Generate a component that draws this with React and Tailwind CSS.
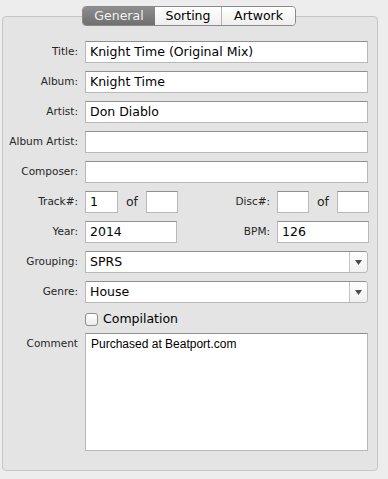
const ui = { fontFamily: '"DejaVu Sans", "Lucida Grande", sans-serif' };

const Label = ({ children }) => (
  <div className="w-[75px] mr-[7px] shrink-0 text-right text-[10.5px] text-[#262626]" style={ui}>
    {children}
  </div>
);

const Field = ({ value = '', className = 'w-[283px]' }) => (
  <div
    className={`${className} h-[22px] shrink-0 flex items-center bg-white border border-[#b8b8b8] border-t-[#8f8f8f] pl-[4px] text-[12.5px] text-black overflow-hidden whitespace-nowrap`}
    style={ui}
  >
    {value}
  </div>
);

const Combo = ({ value }) => (
  <div className="w-[283px] h-[22px] flex bg-white border border-[#b8b8b8] border-t-[#8f8f8f] rounded-r-[4px]" style={ui}>
    <div className="flex-1 flex items-center pl-[4px] text-[12.5px] text-black">{value}</div>
    <div className="w-[18px] flex items-center justify-center border-l border-[#c4c4c4] bg-gradient-to-b from-white to-[#f0f0f0] rounded-r-[3px]">
      <svg width="7" height="5" viewBox="0 0 7 5">
        <path d="M0 0 H7 L3.5 5 Z" fill="#4a4a4a" />
      </svg>
    </div>
  </div>
);

const Row = ({ label, children }) => (
  <div className="flex items-center h-[22px]">
    <Label>{label}</Label>
    {children}
  </div>
);

const Of = () => (
  <span className="text-[12.5px] text-[#262626] w-[28px] text-center shrink-0" style={ui}>
    of
  </span>
);

export default function App() {
  return (
    <div className="w-[388px] h-[479px] bg-[#ededed] flex flex-col pt-[6px] overflow-hidden">
      <div className="relative z-10 flex h-[20px] pl-[82px]">
        <div className="flex h-[20px] border border-[#8a8a8a] rounded-[4px] overflow-hidden text-[12.5px]" style={ui}>
          <div className="w-[72px] flex items-center justify-center bg-gradient-to-b from-[#8e8e8e] to-[#6f6f6f] text-[#f2f2f2]">
            General
          </div>
          <div className="w-[67px] flex items-center justify-center bg-gradient-to-b from-white to-[#eeeeee] text-black border-r border-[#b3b3b3]">
            Sorting
          </div>
          <div className="w-[73px] flex items-center justify-center bg-gradient-to-b from-white to-[#eeeeee] text-black">
            Artwork
          </div>
        </div>
      </div>

      <div className="-mt-[10px] ml-[2px] w-[376px] h-[455px] bg-[#e4e4e4] border border-[#c6c6c6] rounded-[4px] pt-[24px] pr-[8px]">
        <div className="flex flex-col gap-[8px]">
          <Row label="Title:">
            <Field value="Knight Time (Original Mix)" />
          </Row>
          <Row label="Album:">
            <Field value="Knight Time" />
          </Row>
          <Row label="Artist:">
            <Field value="Don Diablo" />
          </Row>
          <Row label="Album Artist:">
            <Field />
          </Row>
          <Row label="Composer:">
            <Field />
          </Row>
          <Row label="Track#:">
            <Field value="1" className="w-[33px]" />
            <Of />
            <Field className="w-[32px]" />
            <div className="flex-1" />
            <Label>Disc#:</Label>
            <Field className="w-[32px]" />
            <Of />
            <Field className="w-[32px]" />
          </Row>
          <Row label="Year:">
            <Field value="2014" className="w-[92px]" />
            <div className="flex-1" />
            <Label>BPM:</Label>
            <Field value="126" className="w-[92px]" />
          </Row>
          <Row label="Grouping:">
            <Combo value="SPRS" />
          </Row>
          <Row label="Genre:">
            <Combo value="House" />
          </Row>
        </div>

        <div className="flex items-center h-[22px] mt-[5px] pl-[82px]">
          <div className="w-[13px] h-[13px] rounded-[3px] border border-[#8e8e8e] bg-gradient-to-b from-white to-[#ececec]" />
          <span className="ml-[5px] text-[12.5px] text-black" style={ui}>
            Compilation
          </span>
        </div>

        <div className="flex mt-[3px]">
          <div className="w-[75px] mr-[7px] shrink-0 text-right text-[10.5px] text-[#262626] pt-[3px]" style={ui}>
            Comment
          </div>
          <div
            className="w-[283px] h-[118px] bg-white border border-[#b8b8b8] border-t-[#8f8f8f] pl-[5px] pt-[1px] text-[12px] text-black"
            style={{ fontFamily: '"Liberation Sans", Arial, sans-serif' }}
          >
            Purchased at Beatport.com
          </div>
        </div>
      </div>
    </div>
  );
}
